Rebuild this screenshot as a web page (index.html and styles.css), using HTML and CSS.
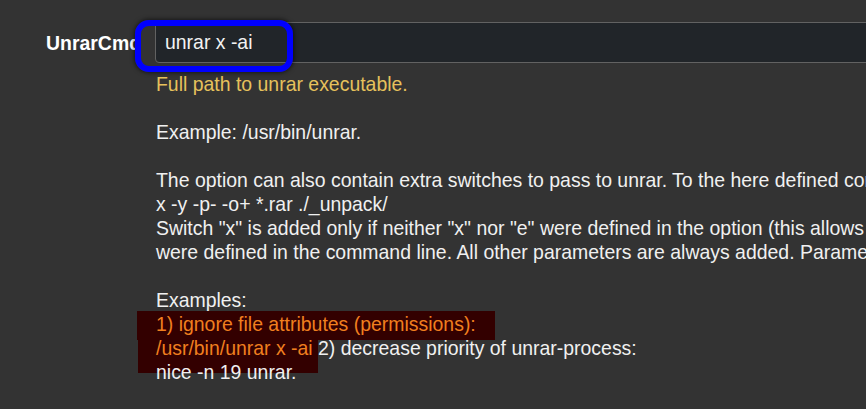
FILE: index.html
```html
<!DOCTYPE html>
<html lang="en">
<head>
<meta charset="utf-8">
<title>UnrarCmd</title>
<link rel="stylesheet" href="styles.css">
</head>
<body>
<div class="page">
  <div class="option-row">
    <label class="option-label" for="unrarcmd">UnrarCmd</label>
    <div class="option-field">
      <div class="input-wrap">
        <input id="unrarcmd" class="option-input" type="text" value="unrar x -ai">
        <span class="focus-ring"></span>
      </div>
      <div class="help">
        <div class="line warn">Full path to unrar executable.</div>
        <div class="line blank"></div>
        <div class="line">Example: /usr/bin/unrar.</div>
        <div class="line blank"></div>
        <div class="line">The option can also contain extra switches to pass to unrar. To the here defined command line following switches are automatically added:</div>
        <div class="line">x -y -p- -o+ *.rar ./_unpack/</div>
        <div class="line">Switch "x" is added only if neither "x" nor "e" were defined in the option (this allows you to use switch "e" instead of "x"). Switch "-o+" is added only if neither "-o+" nor "-o-"</div>
        <div class="line">were defined in the command line. All other parameters are always added. Parameter "-p-" is added only if the parameter "-p" wasn't defined.</div>
        <div class="line blank"></div>
        <div class="line">Examples:</div>
        <div class="line"><span class="hl hl-first">1) ignore file attributes (permissions):</span></div>
        <div class="line"><span class="hl hl-second">/usr/bin/unrar x -ai </span>2) decrease priority of unrar-process:</div>
        <div class="line">nice -n 19 unrar.</div>
      </div>
    </div>
  </div>
</div>
</body>
</html>
```

FILE: styles.css
```css
html, body {
  margin: 0;
  padding: 0;
  background: #333333;
  overflow: hidden;
}

body {
  font-family: "Liberation Sans", Arial, sans-serif;
  font-size: 19.45px;
  line-height: 24px;
  color: #f0f0f0;
}

.page {
  padding-top: 22px;
}

.option-row {
  display: flex;
  align-items: flex-start;
}

.option-label {
  flex: 0 0 155px;
  box-sizing: border-box;
  padding-left: 46px;
  height: 41px;
  display: flex;
  align-items: center;
  font-weight: bold;
  color: #ffffff;
  white-space: nowrap;
}

.option-field {
  flex: 1 1 auto;
  min-width: 0;
}

.input-wrap {
  position: relative;
  width: 760px;
}

.option-input {
  display: block;
  box-sizing: border-box;
  width: 100%;
  height: 41px;
  margin: 0;
  padding: 0 8px 0 9px;
  border: 1px solid #626262;
  border-radius: 4px;
  background: #212529;
  color: #f2f2f2;
  font-family: "Liberation Sans", Arial, sans-serif;
  font-size: 19.45px;
  outline: none;
}

.focus-ring {
  position: absolute;
  left: -20px;
  top: -2px;
  width: 158px;
  height: 52px;
  box-sizing: border-box;
  border: 6px solid #0000ff;
  border-radius: 14px;
  box-shadow: 0 0 4px 1px rgba(0, 0, 0, 0.55);
  pointer-events: none;
}

.help {
  margin-top: 9px;
  padding-left: 1px;
}

.line {
  white-space: nowrap;
  height: 24px;
}

.warn {
  color: #e6c15c;
}

.hl {
  background: #330000;
  color: #f07f1f;
}

.hl-first {
  margin-left: -19px;
  padding: 2px 19px 5px 19px;
}

.hl-second {
  margin-left: -18px;
  padding: 0 0 14px 18px;
}
```
